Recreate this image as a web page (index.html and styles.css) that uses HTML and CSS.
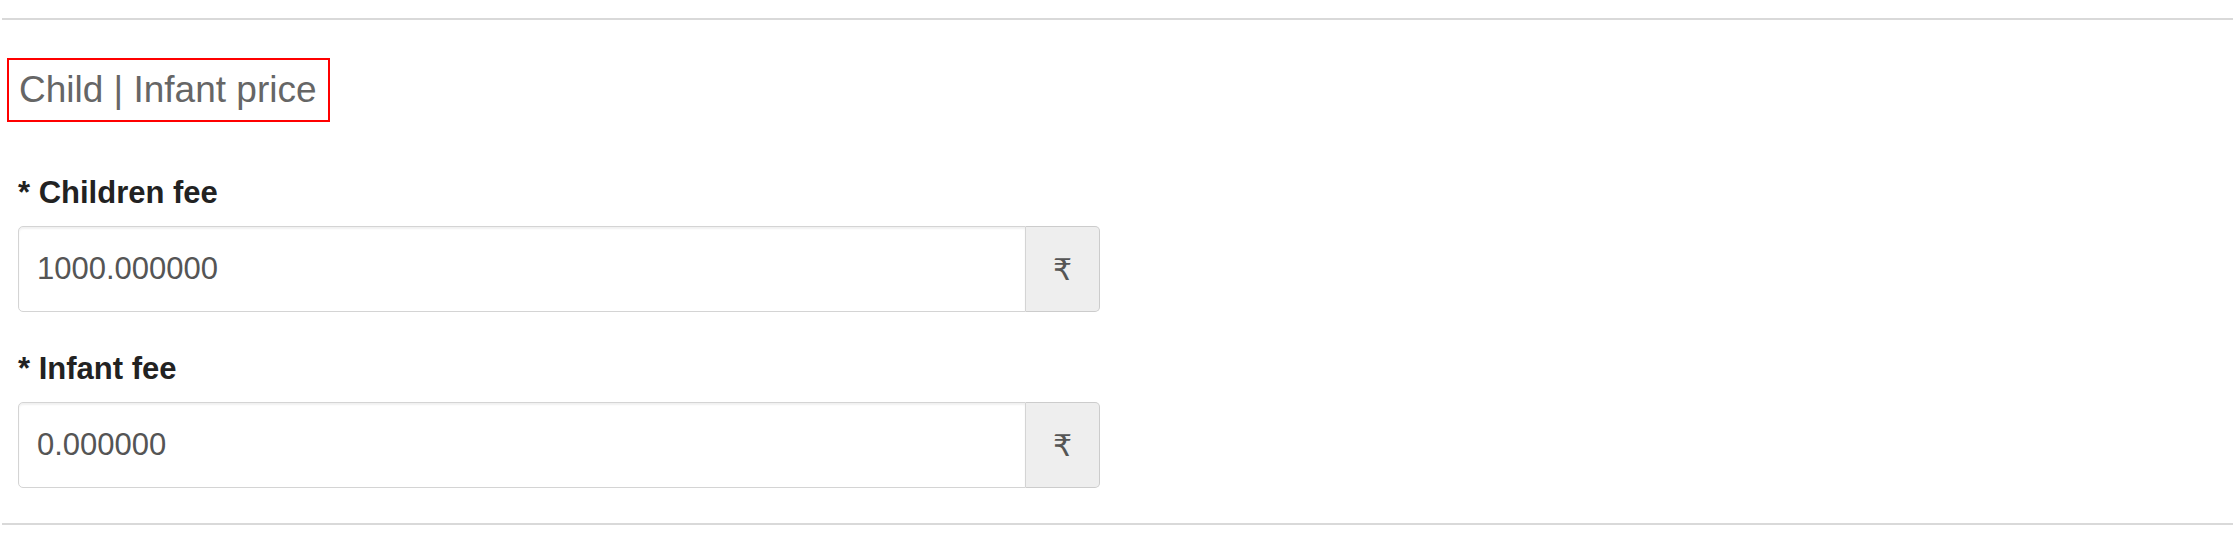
FILE: index.html
```html
<!DOCTYPE html>
<html lang="en">
<head>
    <meta charset="UTF-8">
    <meta name="viewport" content="width=device-width, initial-scale=1.0">
    <title>Child | Infant price</title>
    <link rel="stylesheet" href="styles.css">
</head>
<body>
    <!-- Child / Infant pricing -->
    <section class="price-section">
        <h4 class="section-title">Child | Infant price</h4>

        <div class="fee-form">
            <div class="form-group">
                <label for="children-fee">* Children fee</label>
                <div class="input-group">
                    <input type="text" id="children-fee" class="form-control" value="1000.000000">
                    <span class="input-addon">&#8377;</span>
                </div>
            </div>

            <div class="form-group">
                <label for="infant-fee">* Infant fee</label>
                <div class="input-group">
                    <input type="text" id="infant-fee" class="form-control" value="0.000000">
                    <span class="input-addon">&#8377;</span>
                </div>
            </div>
        </div>
    </section>
</body>
</html>
```

FILE: styles.css
```css
body {
    font-family: 'Liberation Sans', Arial, sans-serif;
    margin: 0;
    padding: 0;
    background-color: #fff;
    color: #333;
}

/* Section */
.price-section {
    margin: 18px 2px 0;
    border-top: 2px solid #d9d9d9;
    border-bottom: 2px solid #d9d9d9;
}

.section-title {
    display: inline-block;
    margin: 38px 0 49px 5px;
    padding: 0 11px 0 10px;
    border: 2px solid #f00;
    font-size: 37px;
    font-weight: normal;
    line-height: 60px;
    color: #666;
}

/* Form */
.fee-form {
    padding-left: 16px;
}

.form-group {
    margin-bottom: 35px;
}

.form-group label {
    display: block;
    margin-bottom: 12px;
    font-size: 31px;
    font-weight: bold;
    line-height: 43px;
    color: #222;
}

.input-group {
    display: flex;
    width: 1082px;
    height: 86px;
}

.form-control {
    flex: 1;
    min-width: 0;
    box-sizing: border-box;
    height: 86px;
    margin: 0;
    padding: 0 18px;
    font-family: 'Liberation Sans', Arial, sans-serif;
    font-size: 31px;
    color: #555;
    background-color: #fff;
    border: 1px solid #d4d4d4;
    border-radius: 5px 0 0 5px;
    box-shadow: inset 0 2px 2px rgba(0,0,0,0.06);
    outline: none;
}

.input-addon {
    display: flex;
    align-items: center;
    justify-content: center;
    box-sizing: border-box;
    width: 74px;
    font-family: 'DejaVu Sans', sans-serif;
    font-size: 30px;
    color: #555;
    background-color: #eee;
    border: 1px solid #ccc;
    border-left: 0;
    border-radius: 0 5px 5px 0;
}
```
